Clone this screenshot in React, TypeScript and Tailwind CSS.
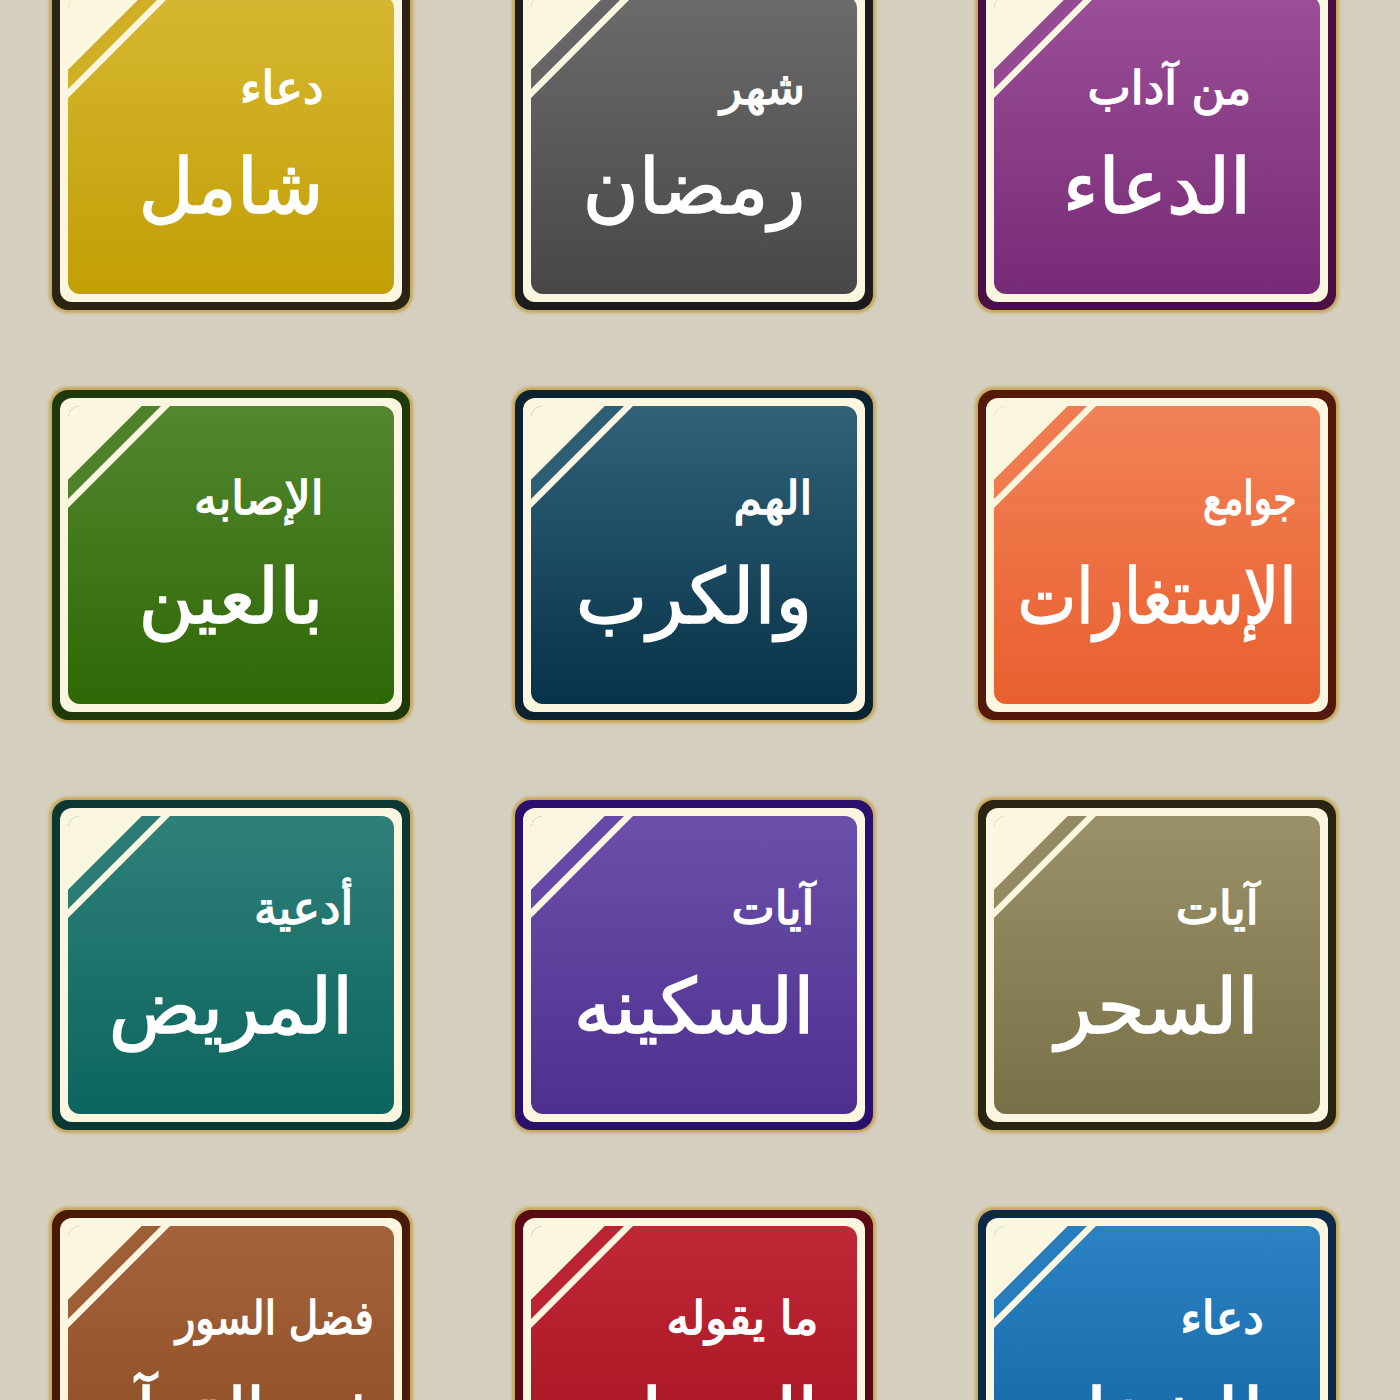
const tiles = [
  { top: "دعاء", main: "شامل", panel: "bg-[linear-gradient(to_bottom,#d6b731,#c29f05)]", stripe: "#d0b024", edge: "bg-[#2b2412]", fit: "" },
  { top: "شهر", main: "رمضان", panel: "bg-[linear-gradient(to_bottom,#6b6b6b,#474747)]", stripe: "#666666", edge: "bg-[#1c1c1c]", fit: "" },
  { top: "من آداب", main: "الدعاء", panel: "bg-[linear-gradient(to_bottom,#9b4f98,#772a75)]", stripe: "#944a92", edge: "bg-[#4a1046]", fit: "" },
  { top: "الإصابه", main: "بالعين", panel: "bg-[linear-gradient(to_bottom,#548630,#2e6805)]", stripe: "#4e822a", edge: "bg-[#1e3a0a]", fit: "" },
  { top: "الهم", main: "والكرب", panel: "bg-[linear-gradient(to_bottom,#30627a,#083247)]", stripe: "#2d5e74", edge: "bg-[#0b2330]", fit: "" },
  { top: "جوامع", main: "الإستغارات", panel: "bg-[linear-gradient(to_bottom,#f18256,#e95f2f)]", stripe: "#ef7c4e", edge: "bg-[#55190c]", fit: "scale-x-[0.82]" },
  { top: "أدعية", main: "المريض", panel: "bg-[linear-gradient(to_bottom,#2f8079,#0b655e)]", stripe: "#2b7b74", edge: "bg-[#0b3833]", fit: "" },
  { top: "آيات", main: "السكينه", panel: "bg-[linear-gradient(to_bottom,#6c4fab,#4e2f8e)]", stripe: "#6649a6", edge: "bg-[#2a106c]", fit: "" },
  { top: "آيات", main: "السحر", panel: "bg-[linear-gradient(to_bottom,#9b9169,#787046)]", stripe: "#958b62", edge: "bg-[#2a2412]", fit: "" },
  { top: "فضل السور", main: "في القرآن", panel: "bg-[linear-gradient(to_bottom,#a4633b,#884820)]", stripe: "#9e5e36", edge: "bg-[#4a1a08]", fit: "scale-x-[0.88]" },
  { top: "ما يقوله", main: "المصاب", panel: "bg-[linear-gradient(to_bottom,#c02836,#a00f1e)]", stripe: "#ba2432", edge: "bg-[#5a0a12]", fit: "" },
  { top: "دعاء", main: "للشفاء", panel: "bg-[linear-gradient(to_bottom,#2c82c2,#0b5f9f)]", stripe: "#287dbd", edge: "bg-[#0c2a48]", fit: "" },
];

function Tile({ t }: { t: (typeof tiles)[number] }) {
  return (
    <div className={`w-[358px] h-[330px] rounded-[16px] p-[8px] shadow-[0_0_3px_3px_#c6a75a] ${t.edge}`}>
      <div className="h-full rounded-[12px] bg-[#fbf6df] p-[8px]">
        <div className={`relative h-full overflow-hidden rounded-[12px] ${t.panel}`}>
          <svg className="absolute top-0 left-0" width="110" height="110" viewBox="0 0 110 110">
            <polygon points="0,0 74,0 0,74" fill="#fbf6df" />
            <polygon points="74,0 93,0 0,93 0,74" fill={t.stripe} />
            <polygon points="93,0 102,0 0,102 0,93" fill="#fbf6df" />
          </svg>
          <div className="flex h-full items-center justify-center pt-[4px]">
            <div
              className={`flex flex-col items-end whitespace-nowrap font-['DejaVu_Sans',sans-serif] font-normal text-white [-webkit-text-stroke:1.5px_white] ${t.fit}`}
            >
              <div dir="rtl" className="text-[46px] leading-[58px]">
                {t.top}
              </div>
              <div dir="rtl" className="mt-[22px] text-[76px] leading-[96px]">
                {t.main}
              </div>
            </div>
          </div>
        </div>
      </div>
    </div>
  );
}

export default function App() {
  return (
    <div className="h-[1400px] w-[1400px] overflow-hidden bg-[#d4cfbf]">
      <div className="-mt-[20px] grid grid-cols-[358px_358px_358px] gap-x-[105px] gap-y-[80px] pl-[52px]">
        {tiles.map((t, i) => (
          <Tile key={i} t={t} />
        ))}
      </div>
    </div>
  );
}
